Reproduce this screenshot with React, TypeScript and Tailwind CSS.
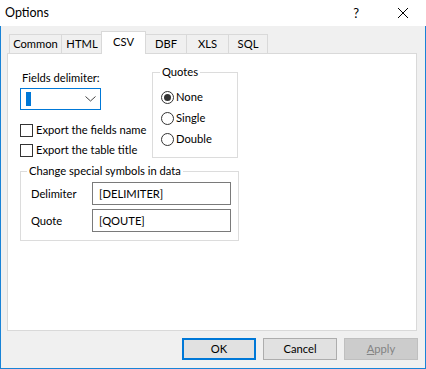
import React from "react";

const font = { fontFamily: 'Lato, "Open Sans", sans-serif' };

function Checkbox({ label }: { label: string }) {
  return (
    <div className="flex items-center h-[16px] whitespace-nowrap">
      <div className="w-[13px] h-[13px] border border-[#333333] bg-white shrink-0" />
      <span className="ml-[3px] leading-[16px] text-black">{label}</span>
    </div>
  );
}

function Radio({ label, checked }: { label: string; checked?: boolean }) {
  return (
    <div className="flex items-center h-[16px] whitespace-nowrap">
      <div className="w-[13px] h-[13px] rounded-full border border-[#333333] bg-white flex items-center justify-center shrink-0">
        {checked && <div className="w-[7px] h-[7px] rounded-full bg-[#333333]" />}
      </div>
      <span className="ml-[2px] leading-[16px] text-black">{label}</span>
    </div>
  );
}

const tabs = [
  { name: "Common", w: "w-[52px]" },
  { name: "HTML", w: "w-[41px]" },
  { name: "CSV", w: "w-[45px]", active: true },
  { name: "DBF", w: "w-[41px]" },
  { name: "XLS", w: "w-[42px]" },
  { name: "SQL", w: "w-[40px]" },
];

export default function App() {
  return (
    <div style={font} className="w-[426px] h-[369px] flex flex-col bg-[#f0f0f0] text-[11.2px] text-black select-none whitespace-nowrap">
      {/* Title bar */}
      <div className="h-[26px] bg-white flex items-center shrink-0">
        <span className="ml-[5px] text-[12.5px] leading-[16px]">Options</span>
        <span className="ml-auto mr-[38px] text-[13px] leading-[16px]">?</span>
        <svg width="12" height="12" viewBox="0 0 12 12" className="mr-[17px]">
          <path d="M1 1 L11 11 M11 1 L1 11" stroke="#000" strokeWidth="1" fill="none" />
        </svg>
      </div>
      {/* Body */}
      <div className="flex-1 flex flex-col border-x border-b border-[#1883d7] pl-[6px] pr-[7px] pt-[5px] pb-[8px]">
        {/* Tabs */}
        <div className="h-[22px] flex items-end pl-[2px] relative z-10">
          {tabs.map((t, i) =>
            t.active ? (
              <div
                key={t.name}
                className={`${t.w} h-[23px] -mb-px bg-white border-t border-x border-[#d9d9d9] flex items-start justify-center pt-[2px] -mx-px`}
              >
                <span className="leading-[16px]">{t.name}</span>
              </div>
            ) : (
              <div
                key={t.name}
                className={`${t.w} h-[19px] bg-[#f0f0f0] border-t border-l ${i === tabs.length - 1 ? "border-r" : ""} border-[#d9d9d9] flex items-center justify-center`}
              >
                <span className="leading-[16px]">{t.name}</span>
              </div>
            )
          )}
        </div>
        {/* Panel */}
        <div className="h-[278px] w-[410px] bg-white border border-[#d9d9d9] pt-[10px] pl-[12px]">
          <div className="flex">
            {/* Left column */}
            <div className="w-[132px] flex flex-col">
              <div className="mt-[6px] leading-[16px] pl-[2px]">Fields delimiter:</div>
              <div className="mt-[2px] w-[81px] h-[22px] border border-[#0078d7] bg-white flex items-center pl-[5px] pr-[3px]">
                <span className="w-[5px] h-[14px] bg-[#0078d7] text-white text-[11px] leading-[14px] overflow-hidden"> </span>
                <svg width="11" height="6" viewBox="0 0 11 6" className="ml-auto mr-[1px]">
                  <path d="M0.5 0.5 L5.5 5 L10.5 0.5" stroke="#444" strokeWidth="1" fill="none" />
                </svg>
              </div>
              <div className="mt-[12px] flex flex-col gap-[4px]">
                <Checkbox label="Export the fields name" />
                <Checkbox label="Export the table title" />
              </div>
            </div>
            {/* Quotes group */}
            <div className="relative mt-[8px] w-[86px] h-[86px] border border-[#dcdcdc] pl-[8px] pt-[16px] flex flex-col gap-[5px]">
              <span className="absolute -top-[9px] left-[7px] bg-white px-[2px] leading-[16px]">Quotes</span>
              <Radio label="None" checked />
              <Radio label="Single" />
              <Radio label="Double" />
            </div>
          </div>
          {/* Change special symbols group */}
          <div className="relative mt-[13px] w-[219px] h-[70px] border border-[#dcdcdc] pt-[10px] pl-[10px] pr-[7px] flex flex-col gap-[4px]">
            <span className="absolute -top-[9px] left-[6px] bg-white px-[2px] leading-[16px]">
              Change special symbols in data
            </span>
            <div className="flex items-center">
              <span className="w-[61px] leading-[16px]">Delimiter</span>
              <div className="flex-1 h-[23px] border border-[#7a7a7a] flex items-center pl-[6px] leading-[16px]">
                [DELIMITER]
              </div>
            </div>
            <div className="flex items-center">
              <span className="w-[61px] leading-[16px]">Quote</span>
              <div className="flex-1 h-[23px] border border-[#7a7a7a] flex items-center pl-[6px] leading-[16px]">
                [QOUTE]
              </div>
            </div>
          </div>
        </div>
        {/* Buttons */}
        <div className="mt-[7px] flex justify-end gap-[7px] pr-[0px]">
          <button className="w-[74px] h-[22px] bg-[#e1e1e1] border-2 border-[#0078d7] leading-[16px]">OK</button>
          <button className="w-[74px] h-[22px] bg-[#e1e1e1] border border-[#adadad] leading-[16px]">Cancel</button>
          <button className="w-[74px] h-[22px] bg-[#cccccc] border border-[#bfbfbf] text-[#838383] leading-[16px]">
            <span className="underline">A</span>pply
          </button>
        </div>
      </div>
    </div>
  );
}
